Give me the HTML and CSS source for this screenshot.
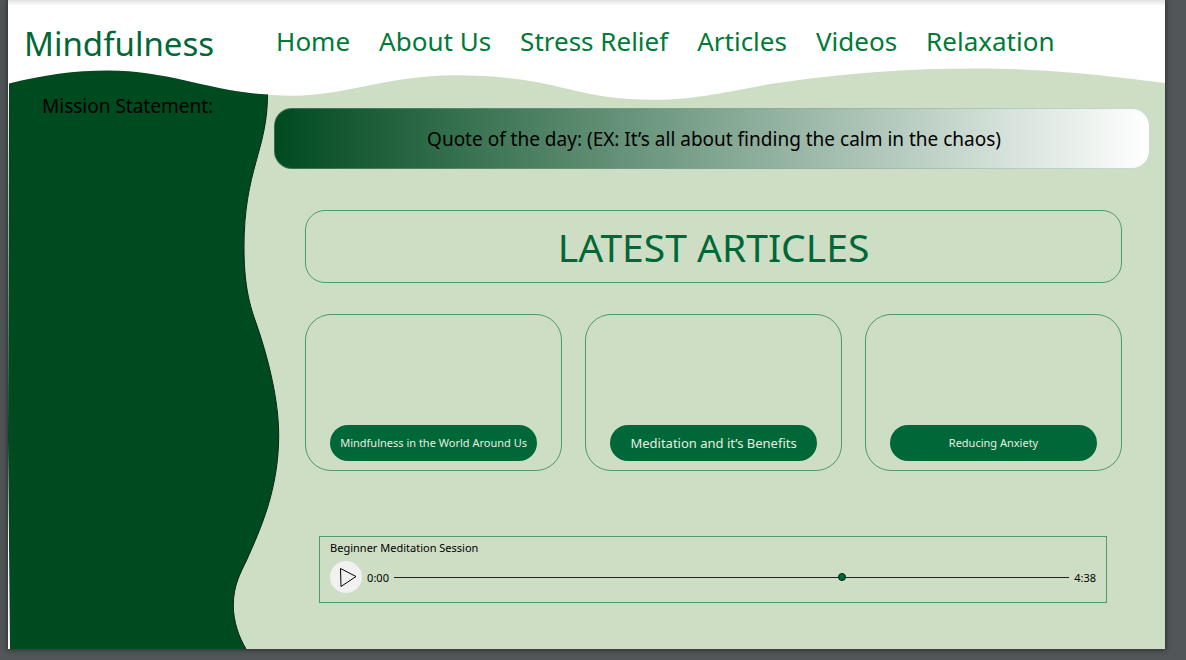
FILE: index.html
```html
<!DOCTYPE html>
<html lang="en">
<head>
<meta charset="utf-8">
<title>Mindfulness</title>
<link rel="stylesheet" href="styles.css">
</head>
<body>
<div class="page">
  <svg class="backdrop" viewBox="8 0 1157 649" preserveAspectRatio="none" aria-hidden="true">
    <path class="backdrop-light" d="M100 71C172 70.500 215 95.700 293 95.700C345 95.700 390 75.300 453 75.300C560 75.300 570 99.700 653 99.700C706 99.700 742 87 790 81.300C850 73 910 68.500 976 68.500C1050 68.500 1110 76 1165 83V649H100Z"/>
    <path class="backdrop-dark" d="M9 83.500C42 75 75 70.500 108 70.500C170 70.500 210 91.500 267.500 94.500C267.500 150 244 170 244 247C244 283 249 303 255 320C265 348 278.700 395 278.700 435C278.700 490 260 530 246.700 560C241 572 233.300 585 233.300 605C233.300 622 239 637 246 649H10L8 440Z"/>
    <path class="backdrop-edge" d="M267.500 94.500C267.500 150 244 170 244 247C244 283 249 303 255 320C265 348 278.700 395 278.700 435C278.700 490 260 530 246.700 560C241 572 233.300 585 233.300 605C233.300 622 239 637 246 649"/>
  </svg>
  <header class="header">
    <a class="brand" href="#">Mindfulness</a>
    <nav class="nav">
      <a href="#">Home</a>
      <a href="#">About Us</a>
      <a href="#">Stress Relief</a>
      <a href="#">Articles</a>
      <a href="#">Videos</a>
      <a href="#">Relaxation</a>
    </nav>
  </header>
  <div class="body">
    <aside class="sidebar">
      <h2 class="mission">Mission Statement:</h2>
    </aside>
    <main class="main">
      <p class="quote">Quote of the day: (EX: It’s all about finding the calm in the chaos)</p>
      <section class="articles">
        <h1 class="articles-title">LATEST ARTICLES</h1>
        <div class="cards">
          <article class="card"><a class="pill" href="#">Mindfulness in the World Around Us</a></article>
          <article class="card"><a class="pill pill-large" href="#">Meditation and it’s Benefits</a></article>
          <article class="card"><a class="pill" href="#">Reducing Anxiety</a></article>
        </div>
      </section>
      <section class="player">
        <label class="player-title" for="seek">Beginner Meditation Session</label>
        <div class="player-controls">
          <button class="play" type="button" aria-label="Play">
            <svg viewBox="0 0 32 32" width="32" height="32" aria-hidden="true"><path d="M10.500 7.500L26 15.500L11 25.500Z"/></svg>
          </button>
          <span>0:00</span>
          <input class="seek" id="seek" type="range" min="0" max="278" value="185">
          <span>4:38</span>
        </div>
      </section>
    </main>
  </div>
</div>
</body>
</html>
```
FILE: styles.css
```css
* {
  box-sizing: border-box;
}

body {
  margin: 0;
  min-height: 100vh;
  padding: 0 21px 11px 8px;
  display: flex;
  background: #525659;
  color: #000;
  font-family: "Noto Sans", "Open Sans", sans-serif;
}

a {
  color: inherit;
  text-decoration: none;
}

.page {
  position: relative;
  z-index: 0;
  flex: 1;
  display: flex;
  flex-direction: column;
  background: linear-gradient(#e2e2e2, #fff 6px);
  box-shadow: 0 0 5px 1px #2c2f31;
}

.backdrop {
  position: absolute;
  inset: 0;
  z-index: -1;
  width: 100%;
  height: 100%;
}

.backdrop-light {
  fill: #cedec5;
}

.backdrop-dark {
  fill: #004a20;
}

.backdrop-edge {
  fill: none;
  stroke: #0a2414;
}

.header {
  display: grid;
  grid-template-columns: 23% 1fr;
  align-items: start;
  padding: 20px 0;
}

.brand {
  padding-left: 16px;
  color: #006838;
  font-size: 33px;
  line-height: 48px;
}

.nav {
  display: flex;
  gap: 29px;
  padding-left: 2px;
  color: #007a37;
  font-size: 26px;
  line-height: 42px;
  white-space: nowrap;
}

.body {
  flex: 1;
  display: grid;
  grid-template-columns: 23% 1fr;
}

.mission {
  margin: 4px 0 0 34px;
  font-size: 19px;
  font-weight: 400;
  line-height: 28px;
}

.main {
  padding: 20px 15px 0 0;
}

.quote {
  margin: 0;
  padding: 1px 0 0 4px;
  border: 1px solid #7fa98c66;
  border-radius: 18px;
  background: linear-gradient(90deg, #004a20, #fff) border-box;
  font-size: 19px;
  line-height: 58px;
  text-align: center;
}

.articles {
  padding: 41px 28px 0 31px;
}

.articles-title {
  margin: 0;
  border: 1px solid #4d9a6c;
  border-radius: 20px;
  color: #006838;
  font-size: 39px;
  font-weight: 400;
  line-height: 71px;
  text-align: center;
}

.cards {
  display: grid;
  grid-template-columns: repeat(3, 1fr);
  gap: 23px;
  margin-top: 31px;
}

.card {
  display: flex;
  align-items: flex-end;
  min-height: 157px;
  padding: 24px 24px 9px;
  border: 1px solid #4d9a6c;
  border-radius: 26px;
}

.pill {
  flex: 1;
  border-radius: 18px;
  background: #006838;
  color: #e4efe0;
  font-size: 11px;
  line-height: 36px;
  text-align: center;
  white-space: nowrap;
}

.pill-large {
  font-size: 13px;
}

.player {
  margin: 65px 43px 0 45px;
  padding: 2px 10px 9px;
  border: 1px solid #4d9a6c;
  font-size: 11px;
}

.player-title {
  display: block;
  line-height: 18px;
}

.player-controls {
  display: flex;
  align-items: center;
  gap: 5px;
  margin-top: 4px;
}

.play {
  flex: none;
  width: 32px;
  height: 32px;
  padding: 0;
  border: 0;
  border-radius: 50%;
  background: #f1f1f2;
}

.play svg {
  display: block;
  fill: none;
  stroke: #000;
}

.seek {
  flex: 1;
  min-width: 0;
  height: 8px;
  margin: 0;
  appearance: none;
  background: linear-gradient(#222, #222) center / 100% 1px no-repeat;
}

.seek::-webkit-slider-thumb {
  appearance: none;
  width: 8px;
  height: 8px;
  border: 1px solid #00210f;
  border-radius: 50%;
  background: #006838;
}
```
